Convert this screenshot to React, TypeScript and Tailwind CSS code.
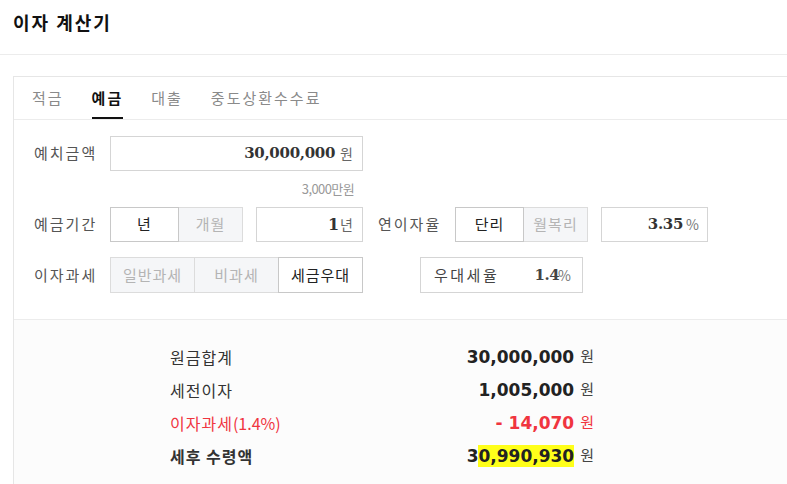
import React from "react";

const kr = { fontFamily: '"Noto Sans CJK KR", "Noto Sans", sans-serif' };
const serif = { fontFamily: '"DejaVu Serif", "Liberation Serif", serif' };
const num = { fontFamily: '"DejaVu Sans", "Liberation Sans", sans-serif' };

function Seg({ items, active, widths }: { items: string[]; active: number; widths: number[] }) {
  return (
    <div className="flex h-full">
      {items.map((t, i) => (
        <div
          key={t}
          style={{ width: widths[i] }}
          className={
            "flex h-full items-center justify-center border text-[15px] tracking-[1px] " +
            (i > 0 ? "-ml-px " : "") +
            (i === active
              ? "relative z-10 border-[#c8c8c8] bg-white text-[#222]"
              : "border-[#dcdcdc] bg-[#f5f6f8] text-[#b4b4b4]")
          }
        >
          {t}
        </div>
      ))}
    </div>
  );
}

function ResultRow({ label, suffix, value, red, bold }: { label: string; suffix?: string; value: React.ReactNode; red?: boolean; bold?: boolean }) {
  return (
    <div className="flex h-[33px] items-center">
      <div className={"flex-1 text-[16px] " + (red ? "text-[#f0353f]" : "text-[#333]") + (bold ? " font-bold" : "")}>
        <span className="tracking-[1px]">{label}</span>
        {suffix && <span>{suffix}</span>}
      </div>
      <div className={"flex items-center " + (red ? "text-[#f0353f]" : "text-[#222]")}>
        <span style={num} className="text-[17px] font-bold leading-[22px]">{value}</span>
        <span className={"ml-[6px] text-[15px] " + (red ? "text-[#f0353f]" : "text-[#444]")}>원</span>
      </div>
    </div>
  );
}

export default function App() {
  return (
    <div style={kr} className="h-[484px] w-[787px] overflow-hidden bg-white">
      <div className="h-[55px] border-b border-[#ececec] px-[13px] pt-[9px]">
        <div className="text-[18px] font-bold leading-[26px] tracking-[2px] text-[#111]">이자 계산기</div>
      </div>
      <div className="ml-[13px] mt-[21px] w-[800px] border border-[#e6e6e6]">
        <div className="flex h-[43px] gap-[28px] border-b border-[#ececec] pl-[18px] text-[15px] tracking-[2px]">
          <div className="flex items-center text-[#8a8a8a]">적금</div>
          <div className="flex items-center border-b-2 border-[#111] pt-[2px] font-bold text-[#111]">예금</div>
          <div className="flex items-center text-[#8a8a8a]">대출</div>
          <div className="flex items-center text-[#8a8a8a]">중도상환수수료</div>
        </div>
        <div className="border-b border-[#ececec] px-[20px] pb-[26px] pt-[16px]">
          <div className="flex h-[35px] items-center">
            <div className="w-[76px] text-[15px] tracking-[2px] text-[#555]">예치금액</div>
            <div className="flex h-full w-[253px] items-center justify-end border border-[#d5d5d5] pr-[9px]">
              <span style={serif} className="text-[15px] font-bold tracking-[-0.3px] text-[#333]">30,000,000</span>
              <span className="ml-[5px] text-[14px] text-[#666]">원</span>
            </div>
          </div>
          <div className="flex h-[36px] w-[329px] items-center justify-end pr-[9px]">
            <span className="text-[13px] tracking-[-0.6px] text-[#999]">3,000만원</span>
          </div>
          <div className="flex h-[35px] items-center">
            <div className="w-[76px] text-[15px] tracking-[2px] text-[#555]">예금기간</div>
            <Seg items={["년", "개월"]} active={0} widths={[69, 65]} />
            <div className="ml-[13px] flex h-full w-[107px] items-center justify-end border border-[#d5d5d5] pr-[9px]">
              <span style={serif} className="text-[16px] font-bold text-[#333]">1</span>
              <span className="ml-[1px] text-[14px] text-[#666]">년</span>
            </div>
            <div className="ml-[15px] w-[77px] text-[15px] tracking-[2px] text-[#555]">연이자율</div>
            <Seg items={["단리", "월복리"]} active={0} widths={[69, 65]} />
            <div className="ml-[13px] flex h-full w-[107px] items-center justify-end border border-[#d5d5d5] pr-[8px]">
              <span style={serif} className="text-[15px] font-bold tracking-[-0.3px] text-[#333]">3.35</span>
              <span className="ml-[3px] text-[14px] text-[#777]">%</span>
            </div>
          </div>
          <div className="mt-[15px] flex h-[36px] items-center">
            <div className="w-[76px] text-[15px] tracking-[2px] text-[#555]">이자과세</div>
            <Seg items={["일반과세", "비과세", "세금우대"]} active={2} widths={[85, 85, 85]} />
            <div className="ml-[57px] flex h-full w-[163px] items-center justify-between border border-[#d5d5d5] pl-[13px] pr-[11px]">
              <span className="text-[15px] tracking-[2.5px] text-[#444]">우대세율</span>
              <span className="flex items-center">
                <span style={serif} className="text-[15px] font-bold tracking-[-0.5px] text-[#444]">1.4</span>
                <span className="-ml-[1px] text-[14px] text-[#777]">%</span>
              </span>
            </div>
          </div>
        </div>
        <div className="h-[200px] bg-[#fcfcfc] pt-[20px]">
          <div className="ml-[156px] w-[424px]">
            <ResultRow label="원금합계" value="30,000,000" />
            <ResultRow label="세전이자" value="1,005,000" />
            <ResultRow label="이자과세" suffix="(1.4%)" value="- 14,070" red />
            <ResultRow
              label="세후 수령액"
              bold
              value={
                <>
                  3<span className="bg-[#ffff1a] py-[1px]">0,990,930</span>
                </>
              }
            />
          </div>
        </div>
      </div>
    </div>
  );
}
